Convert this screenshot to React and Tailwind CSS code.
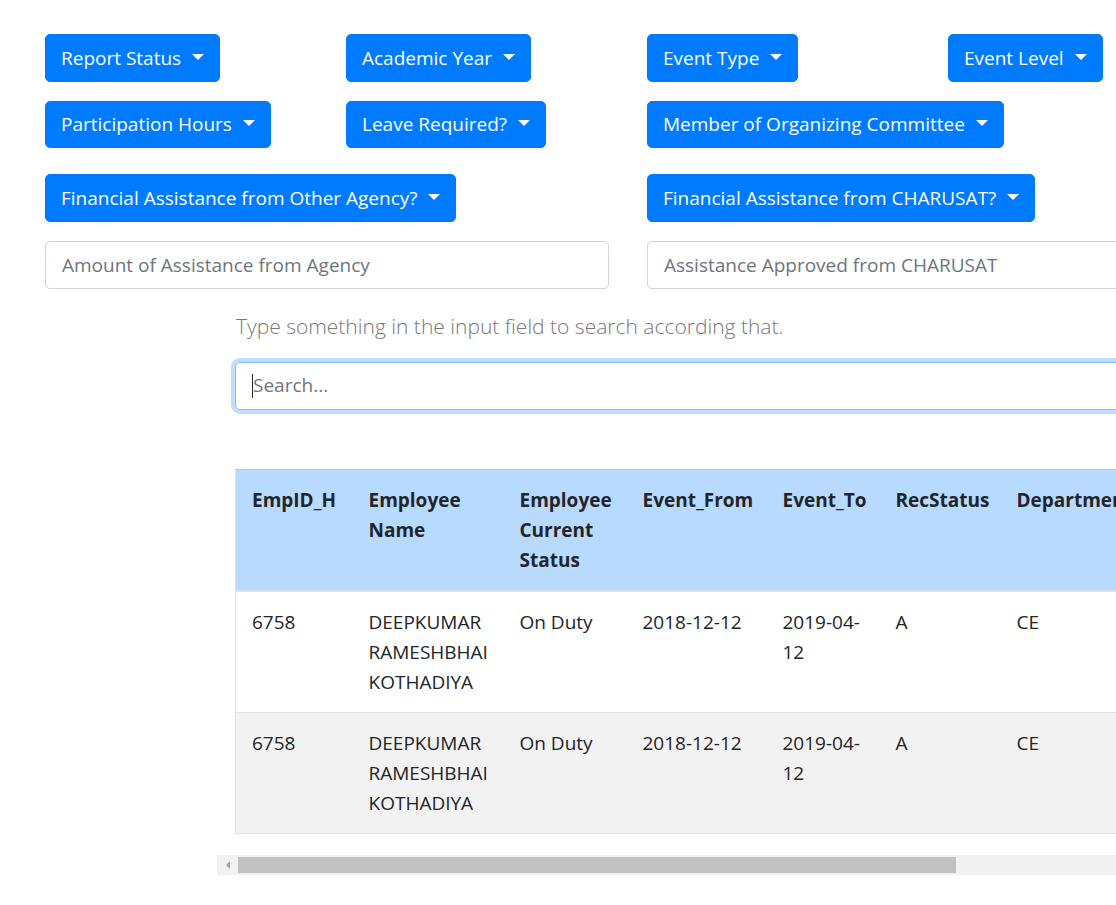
import React from "react";

const font = { fontFamily: '"Open Sans", "Noto Sans", Arial, sans-serif' };

function Dropdown({ label, className = "" }) {
  return (
    <button
      className={
        "inline-flex items-center whitespace-nowrap rounded-[5px] border border-[#007bff] bg-[#007bff] px-[15px] py-[7.75px] text-[19px] leading-[30px] text-white " +
        className
      }
    >
      {label}
      <span className="ml-[11px] mb-[2px] inline-block h-0 w-0 border-x-[6px] border-t-[6px] border-x-transparent border-t-white"></span>
    </button>
  );
}

const rows = [
  ["6758", ["DEEPKUMAR", "RAMESHBHAI", "KOTHADIYA"], "On Duty", "2018-12-12", ["2019-04-", "12"], "A", "CE"],
  ["6758", ["DEEPKUMAR", "RAMESHBHAI", "KOTHADIYA"], "On Duty", "2018-12-12", ["2019-04-", "12"], "A", "CE"],
];

function Cell({ value }) {
  if (Array.isArray(value)) {
    return value.map((v, i) => (
      <span key={i} className="block whitespace-nowrap">
        {v}
      </span>
    ));
  }
  return <span className="whitespace-nowrap">{value}</span>;
}

export default function App() {
  return (
    <div className="w-full overflow-hidden bg-white text-[#212529]" style={font}>
      <div className="w-[1400px] pt-[34px] pb-[30px]">
        {/* filters */}
        <div className="ml-[45px] grid grid-cols-[301px_301px_301px_301px] items-start justify-items-start">
          <Dropdown label="Report Status" />
          <Dropdown label="Academic Year" />
          <Dropdown label="Event Type" />
          <Dropdown label="Event Level" />

          <Dropdown label="Participation Hours" className="mt-[19px]" />
          <Dropdown label="Leave Required?" className="mt-[19px]" />
          <Dropdown label="Member of Organizing Committee" className="col-span-2 mt-[19px]" />

          <Dropdown label="Financial Assistance from Other Agency?" className="col-span-2 mt-[26px]" />
          <Dropdown label="Financial Assistance from CHARUSAT?" className="col-span-2 mt-[26px]" />

          <input
            placeholder="Amount of Assistance from Agency"
            className="col-span-2 mt-[19px] h-[48px] w-[564px] rounded-[5px] border border-[#ced4da] px-[16px] text-[19px] text-[#495057] outline-none placeholder:text-[#6c757d]"
          />
          <input
            placeholder="Assistance Approved from CHARUSAT"
            className="col-span-2 mt-[19px] h-[48px] w-[564px] rounded-[5px] border border-[#ced4da] px-[16px] text-[19px] text-[#495057] outline-none placeholder:text-[#6c757d]"
          />
        </div>

        {/* search + table */}
        <div className="ml-[235px] mt-[22px] w-[1100px]">
          <p className="pl-px text-[21px] font-light leading-[30px] text-[#777]">
            Type something in the input field to search according that.
          </p>
          <div className="mt-[21px] flex h-[48px] w-[1000px] items-center rounded-[5px] border border-[#80bdff] px-[16px] shadow-[0_0_0_4px_rgba(0,123,255,0.25)]">
            <span className="h-[24px] w-px bg-[#222]"></span>
            <span className="text-[19px] text-[#6c757d]">Search...</span>
          </div>

          <table className="mt-[59px] w-[928px] table-fixed border-collapse border border-[#dee2e6] text-[19px] leading-[30px]">
            <colgroup>
              <col className="w-[117px]" />
              <col className="w-[151px]" />
              <col className="w-[123px]" />
              <col className="w-[140px]" />
              <col className="w-[113px]" />
              <col className="w-[121px]" />
              <col className="w-[162px]" />
            </colgroup>
            <thead>
              <tr className="border-t border-b-2 border-[#a6c8ec] border-b-[#dee2e6] bg-[#b8daff] text-left align-top font-bold">
                <th className="px-[16px] py-[15px]">EmpID_H</th>
                <th className="px-[16px] py-[15px]">
                  <Cell value={["Employee", "Name"]} />
                </th>
                <th className="px-[16px] py-[15px]">
                  <Cell value={["Employee", "Current", "Status"]} />
                </th>
                <th className="px-[16px] py-[15px]">
                  <Cell value="Event_From" />
                </th>
                <th className="px-[16px] py-[15px]">
                  <Cell value="Event_To" />
                </th>
                <th className="px-[16px] py-[15px]">
                  <Cell value="RecStatus" />
                </th>
                <th className="px-[16px] py-[15px]">
                  <Cell value="Department" />
                </th>
              </tr>
            </thead>
            <tbody>
              {rows.map((r, i) => (
                <tr
                  key={i}
                  className={
                    "border-t border-[#dee2e6] align-top " + (i % 2 === 1 ? "bg-[#f2f2f2]" : "bg-white")
                  }
                >
                  {r.map((v, j) => (
                    <td key={j} className="px-[16px] py-[15px]">
                      <Cell value={v} />
                    </td>
                  ))}
                </tr>
              ))}
            </tbody>
          </table>

          {/* horizontal scrollbar of the table wrapper */}
          <div className="-ml-[18px] mt-[21px] flex h-[20px] w-[1000px] items-center bg-[#f1f1f1]">
            <div className="flex h-[20px] w-[21px] items-center justify-center">
              <span className="inline-block h-0 w-0 border-y-[4px] border-r-[4px] border-y-transparent border-r-[#a3a3a3]"></span>
            </div>
            <div className="h-[16px] w-[718px] bg-[#c1c1c1]"></div>
          </div>
        </div>
      </div>
    </div>
  );
}
